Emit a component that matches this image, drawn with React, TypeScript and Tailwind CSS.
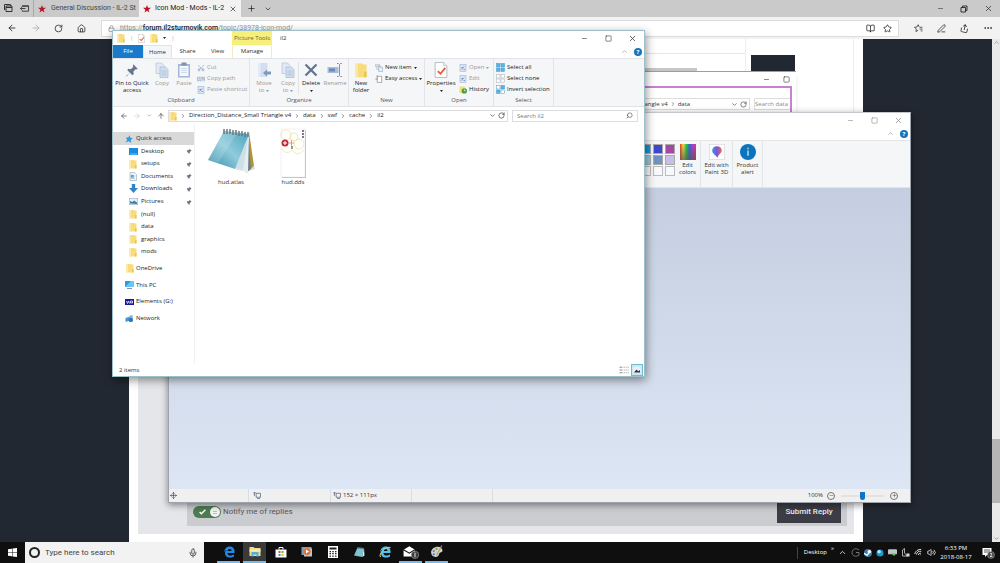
import React from 'react';
import {
  ArrowLeft,
  ArrowRight,
  ArrowUp,
  BookOpen,
  ChevronDown,
  ChevronRight,
  ChevronUp,
  Ellipsis,
  House,
  Lock,
  Mic,
  Minus,
  Move,
  PenLine,
  Plus,
  RotateCw,
  Scissors,
  Search,
  Share,
  Square,
  Star,
  Volume2,
  Wifi,
  X,
} from 'lucide-react';

type Kids = { children?: React.ReactNode };

/* ---------- small drawings ---------- */

const Folder = ({ className = 'h-2.5 w-2' }: { className?: string }) => (
  <svg viewBox="0 0 16 20" className={className} aria-hidden="true">
    <path d="M1 2h9l1 1h4v16H1z" fill="#f8dc7c" />
    <path d="M1 2h3v17H1z" fill="#fbe9a6" />
    <path d="M12 12h3v7h-3z" fill="#e9c558" />
  </svg>
);

const RedStar = () => (
  <svg viewBox="0 0 20 20" className="h-2 w-2 shrink-0" aria-hidden="true">
    <path d="M10 0l2.6 7H20l-6 4.600 2.300 7.400L10 14.500 3.700 19 6 11.600 0 7h7.400z" fill="#b8142a" />
  </svg>
);

const CheckPage = ({ className }: { className: string }) => (
  <svg viewBox="0 0 24 30" className={className} aria-hidden="true">
    <path d="M1 1h16l6 6v22H1z" fill="#fff" stroke="#a9adb3" strokeWidth="1.500" />
    <path d="M17 1v6h6" fill="#e8eaed" stroke="#a9adb3" />
    <path d="M6 17l5 5 9-11" fill="none" stroke="#e0603a" strokeWidth="3.500" />
  </svg>
);

const Pages = ({ className = 'h-4 w-4' }: { className?: string }) => (
  <svg viewBox="0 0 32 32" className={className} aria-hidden="true">
    <path d="M4 2h11l5 5v16H4z" fill="#e2e9f5" stroke="#b5c5de" strokeWidth="1.500" />
    <path d="M12 10h11l5 5v16H12z" fill="#d3deef" stroke="#a9bcd8" strokeWidth="1.500" />
    <path d="M15 18h10M15 22h10M15 26h10" stroke="#a9bcd8" strokeWidth="1.500" />
  </svg>
);

const PinBig = () => (
  <svg viewBox="0 0 32 32" className="h-3.5 w-3.5" aria-hidden="true">
    <path d="M19 3l10 10-3 2-2-1-5 6 1 5-3 3-6-6-7 8-2 1 1-2 8-7-6-6 3-3 5 1 6-5-1-2z" fill="#65778e" />
  </svg>
);

const PinSmall = () => (
  <svg viewBox="0 0 16 16" className="h-1.5 w-1.5" aria-hidden="true">
    <path d="M9 1l6 6-2 1-3 3v3l-2 1-3-3-4 4 4-5-3-3 1-2h3l4-3z" fill="#6d7580" />
  </svg>
);

const Clipboard = () => (
  <svg viewBox="0 0 28 32" className="h-4 w-3.5" aria-hidden="true">
    <rect x="2" y="4" width="24" height="27" fill="#a5b8d5" />
    <rect x="5" y="8" width="18" height="20" fill="#f4f7fc" />
    <rect x="9" y="1" width="10" height="6" fill="#7f92b0" />
    <path d="M8 13h12M8 17h12M8 21h12" stroke="#c2cfe4" strokeWidth="1.500" />
  </svg>
);

const MoveTo = () => (
  <svg viewBox="0 0 30 32" className="h-4 w-4" aria-hidden="true">
    <path d="M3 2h19v28H3z" fill="#d3dff1" />
    <path d="M3 2h5v28H3z" fill="#e3ebf7" />
    <path d="M13 22l8-7v4h8v6h-8v4z" fill="#8299bf" />
  </svg>
);

const DeleteX = () => (
  <svg viewBox="0 0 28 28" className="h-3.5 w-3.5" aria-hidden="true">
    <path d="M3 3l22 22M25 3L3 25" stroke="#62748f" strokeWidth="4.500" />
  </svg>
);

const Rename = () => (
  <svg viewBox="0 0 32 30" className="h-4 w-4" aria-hidden="true">
    <rect x="1" y="9" width="22" height="12" fill="#a9bddb" />
    <rect x="4" y="12" width="12" height="6" fill="#6d88b3" />
    <path d="M20 2h3l2 2 2-2h3M25 4v22M20 28h3l2-2 2 2h3" fill="none" stroke="#7e93b5" strokeWidth="2" />
  </svg>
);

const Help = () => (
  <span className="flex size-2 items-center justify-center rounded-full bg-[#1673bd] text-[6px] leading-none font-bold text-white">
    ?
  </span>
);

const TinyPage = ({ tint }: { tint: 'blue' | 'grey' }) => (
  <svg viewBox="0 0 16 16" className="size-2 shrink-0" aria-hidden="true">
    <rect x="2" y="1" width="12" height="14" fill={tint === 'blue' ? '#dbe6f6' : '#fff'} stroke={tint === 'blue' ? '#8fa9d0' : '#7f858d'} />
    <path d="M5 11l5-6M5 7h3M9 11h3" stroke={tint === 'blue' ? '#5b7fb8' : '#7f858d'} strokeWidth="1.500" />
  </svg>
);

const ShortPath = () => (
  <svg viewBox="0 0 18 12" className="h-1.5 w-2 shrink-0" aria-hidden="true">
    <rect x="0" y="1" width="18" height="10" fill="#b3c2da" />
    <path d="M3 3l2 6M8 3l2 6M12 9h4" stroke="#fff" strokeWidth="1.500" />
  </svg>
);

const NewItemIcon = () => (
  <svg viewBox="0 0 18 18" className="size-2 shrink-0" aria-hidden="true">
    <path d="M1 1h9v5H1zM4 4h8v8H4z" fill="#fff" stroke="#8b9199" />
    <path d="M8 7h9v10H8z" fill="#dff0fb" stroke="#6f94b5" />
  </svg>
);

const EasyIcon = () => (
  <svg viewBox="0 0 18 18" className="size-2 shrink-0" aria-hidden="true">
    <path d="M5 3h10v14H5z" fill="#fff" stroke="#7f858d" strokeWidth="1.500" />
    <path d="M1 9h5M5 1v4" stroke="#7f858d" strokeWidth="2" />
  </svg>
);

const HistoryIcon = () => (
  <svg viewBox="0 0 18 18" className="size-2 shrink-0" aria-hidden="true">
    <path d="M1 1h12v15H1z" fill="#f2df77" />
    <circle cx="12" cy="11" r="6" fill="#4c9a4a" />
    <path d="M12 7v4h3" stroke="#fff" strokeWidth="1.500" fill="none" />
  </svg>
);

const SelectIcon = ({ kind }: { kind: 'all' | 'none' | 'invert' }) => {
  const cell = (x: number, y: number, lit: boolean) => (
    <rect x={x} y={y} width="7" height="7" fill={lit ? '#58b4e6' : '#ffffff'} stroke={kind === 'none' ? '#a7adb4' : '#4b97c4'} />
  );
  return (
    <svg viewBox="0 0 18 18" className="size-[9px] shrink-0" aria-hidden="true">
      {cell(1, 1, kind === 'all')}
      {cell(10, 1, kind !== 'none')}
      {cell(1, 10, kind !== 'none')}
      {cell(10, 10, kind === 'all')}
    </svg>
  );
};

/* ---------- window buttons ---------- */

const RestoreIcon = () => (
  <svg viewBox="0 0 16 16" className="size-2" fill="none" stroke="currentColor" strokeWidth="2" aria-hidden="true">
    <path d="M2 5h9v9H2zM5 5V2h9v9h-3" />
  </svg>
);

const Controls = ({ tone = 'text-[#333]', restored }: { tone?: string; restored?: boolean }) => (
  <div className={`flex ${tone}`}>
    <button aria-label="Minimize" className="flex w-6 items-center justify-center"><Minus size={7} /></button>
    <button aria-label="Maximize" className="flex w-6 items-center justify-center">
      {restored ? <RestoreIcon /> : <Square size={7} strokeWidth={2} />}
    </button>
    <button aria-label="Close" className="flex w-6 items-center justify-center"><X size={9} /></button>
  </div>
);

/* ---------- browser ---------- */

const Browser = () => (
  <header className="font-[Roboto,sans-serif] text-[#222]">
    <div className="flex h-[17px] bg-[#cacaca] text-[7px]">
      <div className="flex w-[34px] items-center justify-between border-r border-[#a9a9a9] pr-1 pl-1">
        <svg viewBox="0 0 18 18" className="size-[9px]" aria-hidden="true">
          <path d="M1 12V1h12v3M4 15V4h12v11z M4 7h12" fill="none" stroke="#333" strokeWidth="2" />
        </svg>
        <svg viewBox="0 0 20 18" className="size-[9px]" aria-hidden="true">
          <path d="M5 5V3h14v12H5v-2M5 4h14M12 9H1M4 6L1 9l3 3" fill="none" stroke="#333" strokeWidth="2" />
        </svg>
      </div>
      <button className="flex w-[105px] items-center gap-[5px] overflow-hidden pl-1 whitespace-nowrap text-[#444]">
        <RedStar /><span>General Discussion - IL-2 St</span>
      </button>
      <div className="flex w-[102px] items-center bg-[#f2f2f2] pl-1">
        <button className="flex flex-1 items-center gap-1 whitespace-nowrap">
          <RedStar /><span>Icon Mod - Mods - IL-2</span>
        </button>
        <button aria-label="Close tab" className="px-1"><X size={8} /></button>
      </div>
      <div className="flex flex-1 items-center gap-2 pl-1.5">
        <button aria-label="New tab"><Plus size={9} /></button>
        <button aria-label="Tab list"><ChevronDown size={8} /></button>
      </div>
      <Controls restored />
    </div>
    <div className="flex h-[22px] items-center bg-[#f2f2f2]">
      <nav className="flex w-[101px] items-center justify-around pr-2">
        <button aria-label="Back"><ArrowLeft size={10} /></button>
        <button aria-label="Forward" className="text-[#aaa]"><ArrowRight size={10} /></button>
        <button aria-label="Refresh"><RotateCw size={9} /></button>
        <button aria-label="Home"><House size={9} /></button>
      </nav>
      <div className="flex h-[17px] flex-1 items-center border border-[#dcdcdc] bg-white">
        <div className="relative flex flex-1 items-center gap-2 pl-1.5 text-[7px]">
          <Lock size={7} className="text-[#777]" />
          <input aria-label="Address" className="h-3 flex-1 bg-transparent outline-none" />
          <div className="pointer-events-none absolute left-[18px] whitespace-nowrap text-[#999]">
            https://<b className="font-medium text-[#222]">forum.il2sturmovik.com</b>/topic/38978-icon-mod/
          </div>
        </div>
        <div className="flex gap-2 pr-1.5">
          <button aria-label="Reading view"><BookOpen size={9} /></button>
          <button aria-label="Add to favorites"><Star size={9} /></button>
        </div>
      </div>
      <div className="flex w-[101px] items-center justify-around pl-2">
        <button aria-label="Favorites">
          <svg viewBox="0 0 24 22" className="h-2 w-[9px]" fill="none" stroke="currentColor" strokeWidth="2" aria-hidden="true">
            <path d="M15 9h8M15 14h8M18 19h5M14 8l-3-6-3 6-7 1 5 5-1 7 6-4" />
          </svg>
        </button>
        <button aria-label="Add notes"><PenLine size={9} /></button>
        <button aria-label="Share"><Share size={9} className="rotate-12" /></button>
        <button aria-label="More"><Ellipsis size={10} /></button>
      </div>
    </div>
  </header>
);

const ForumPage = () => (
  <div className="flex min-h-0 flex-1 bg-[#222831]">
    <div className="flex flex-1 justify-center">
      <main className="flex h-full w-[74%] flex-col bg-white px-[9px] pb-2">
        <div className="flex flex-1 flex-col justify-end bg-[#e5e6ea] pr-[7px] pb-2 pl-[49px]">
          <div className="flex h-7 items-center justify-between bg-[#cbccd0] px-1.5 font-[Roboto,sans-serif]">
            <label className="flex items-center gap-0.5 text-[8px] text-[#55565c]">
              <span className="relative flex h-3 w-7 items-center justify-between rounded-full bg-[#4c7c50] pr-px pl-1.5">
                <input type="checkbox" defaultChecked className="absolute inset-0 m-0 appearance-none" />
                <svg viewBox="0 0 12 10" className="h-1.5 w-[7px]" aria-hidden="true"><path d="M1 5l3 3 7-7" fill="none" stroke="#fff" strokeWidth="2.500" /></svg>
                <span className="flex size-2.5 flex-col items-center justify-center gap-px rounded-full bg-[#f3f3f3]">
                  <span className="h-px w-1 bg-[#bbb]" /><span className="h-px w-1 bg-[#bbb]" />
                </span>
              </span>
              <span>Notify me of replies</span>
            </label>
            <button className="h-[21px] w-16 bg-[#3c3c46] text-[8px] font-medium text-[#eee]">Submit Reply</button>
          </div>
        </div>
      </main>
    </div>
    <div className="flex w-2 flex-col items-center justify-between bg-[#e9e9e9] text-[#777]">
      <ChevronUp size={7} />
      <div className="mt-auto mb-8 h-16 w-full bg-[#b5b5b5]" />
      <ChevronDown size={7} />
    </div>
  </div>
);

/* ---------- background windows ---------- */

const PostPreview = () => (
  <div className="absolute top-[39px] left-[600px] flex h-20 w-[254px] border-r border-[#eee] bg-white">
    <div className="flex h-full w-[146px] flex-col justify-start border-r border-[#eee] pt-[14px]">
      <div className="h-[15px] border-t border-[#e6e6e6]" />
      <div className="h-1.5 w-[97px] bg-[#c6c6c6]" />
    </div>
    <div className="mt-4 ml-[5px] h-4 w-11 bg-[#222831]" />
  </div>
);

const DataWindow = () => (
  <section aria-label="data" className="absolute top-[71px] left-[560px] h-12 w-[236px] border-t border-[#8aa5ab] bg-white shadow-md">
    <div className="flex h-[14px] justify-end text-[#333]">
      <button aria-label="Minimize" className="flex w-5 items-center justify-center"><Minus size={7} /></button>
      <button aria-label="Maximize" className="flex w-5 items-center justify-center"><Square size={7} strokeWidth={2} /></button>
    </div>
    <div className="mr-1 flex h-8 items-start gap-1 border-t-2 border-r-2 border-[#c97fd2] pt-2.5 pl-20 text-[6px] text-[#333]">
      <div className="flex h-3 flex-1 items-center border border-[#ddd]">
        <span className="pl-0.5 whitespace-nowrap">iangle v4</span>
        <ChevronRight size={6} className="mx-0.5" />
        <span className="flex-1">data</span>
        <ChevronDown size={7} />
        <RotateCw size={7} className="mx-0.5" />
      </div>
      <div className="h-3 w-9 border border-r-0 border-[#ddd]">
        <input aria-label="Search data" placeholder="Search data" className="block h-full w-full outline-none placeholder:text-[#888]" />
      </div>
    </div>
  </section>
);

const Swatches = () => (
  <div className="grid grid-cols-3 gap-x-0.5 gap-y-px">
    <span className="size-2.5 border border-[#aaa] bg-[#0f96d8]" />
    <span className="size-2.5 border border-[#aaa] bg-[#3f48cc]" />
    <span className="size-2.5 border border-[#aaa] bg-[#a349a4]" />
    <span className="size-2.5 border border-[#aaa] bg-[#8fc9dc]" />
    <span className="size-2.5 border border-[#aaa] bg-[#7092be]" />
    <span className="size-2.5 border border-[#aaa] bg-[#c8bfe7]" />
    <span className="size-2.5 border border-[#bbb] bg-[#f8f9fa]" />
    <span className="size-2.5 border border-[#bbb] bg-[#f8f9fa]" />
    <span className="size-2.5 border border-[#bbb] bg-[#f8f9fa]" />
  </div>
);

const PaintTool = ({ width, label, children }: Kids & { width: string; label: string }) => (
  <button className={`flex ${width} flex-col items-center gap-0.5 border-r border-[#e3e5e8] pt-[3px] leading-[7px]`}>
    {children}
    <span className="whitespace-pre-line">{label}</span>
  </button>
);

const SizeIcon = () => (
  <svg viewBox="0 0 18 16" className="h-[7px] w-2" aria-hidden="true">
    <path d="M1 2h5M3 0v9M7 3h10v9H7zM9 15h7" fill="none" stroke="#3d5270" strokeWidth="1.500" />
  </svg>
);

const PaintWindow = () => (
  <section aria-label="Paint" className="absolute top-[112px] left-[168px] flex h-[391px] w-[743px] flex-col border border-[#9da3ac] border-t-[#c4c8cd] bg-white text-[6px] text-[#333] shadow-[0_2px_7px_rgba(0,0,0,0.45)]">
    <div className="flex h-[14px] justify-end"><Controls tone="text-[#888]" /></div>
    <div className="flex h-[13px] items-center justify-end gap-1.5 pr-0.5"><ChevronUp size={7} className="text-[#888]" /><Help /></div>
    <div className="flex h-12 border-y border-[#e3e5e8] bg-[#f5f6f7] pl-[472px]">
      <div className="pt-[3px]"><Swatches /></div>
      <PaintTool width="w-[26px]" label={'Edit\ncolors'}>
        <svg viewBox="0 0 30 30" className="size-4" aria-hidden="true">
          <defs>
            <linearGradient id="hue"><stop offset="0" stopColor="#e83a2b" /><stop offset=".2" stopColor="#e8e43c" /><stop offset=".4" stopColor="#2fc24a" /><stop offset=".6" stopColor="#2f64e0" /><stop offset=".8" stopColor="#b23ad8" /><stop offset="1" stopColor="#e8365c" /></linearGradient>
            <linearGradient id="dark" x1="0" x2="0" y1="0" y2="1"><stop offset="0" stopColor="#555" stopOpacity="0" /><stop offset="1" stopColor="#555" stopOpacity=".7" /></linearGradient>
          </defs>
          <rect width="30" height="30" fill="url(#hue)" /><rect width="30" height="30" fill="url(#dark)" />
        </svg>
      </PaintTool>
      <PaintTool width="w-8" label={'Edit with\nPaint 3D'}>
        <svg viewBox="0 0 30 30" className="size-4" aria-hidden="true">
          <defs><linearGradient id="drop" x1="0" x2="1"><stop offset="0" stopColor="#2b9ce8" /><stop offset=".5" stopColor="#7d56d8" /><stop offset="1" stopColor="#f06a50" /></linearGradient></defs>
          <rect x=".5" y=".5" width="29" height="29" fill="#fff" stroke="#ccc" />
          <path d="M15 4c6 0 9 4 9 8 0 5-6 6-8 14-3-5-10-8-10-14 0-4 3-8 9-8z" fill="url(#drop)" />
        </svg>
      </PaintTool>
      <PaintTool width="w-[30px]" label={'Product\nalert'}>
        <svg viewBox="0 0 30 30" className="size-4" aria-hidden="true">
          <circle cx="15" cy="15" r="15" fill="#0c74bd" /><path d="M15 12v10M15 7v3" stroke="#fff" strokeWidth="2" />
        </svg>
      </PaintTool>
    </div>
    <div className="flex-1 bg-linear-to-b from-[#c5cee0] to-[#dce6f4]" />
    <footer className="flex h-[13px] items-center bg-[#f0f0f0]">
      <div className="flex h-full w-20 items-center border-r border-[#ddd] pl-px"><Move size={7} /></div>
      <div className="flex h-full w-[82px] items-center border-r border-[#ddd] pl-1"><SizeIcon /></div>
      <div className="flex h-full w-[81px] items-center gap-0.5 border-r border-[#ddd] pl-0.5"><SizeIcon /><span>152 × 111px</span></div>
      <div className="h-full w-[81px] border-r border-[#ddd]" />
      <div className="flex h-full flex-1 items-center justify-end gap-1 pr-3">
        <span>100%</span>
        <button aria-label="Zoom out" className="flex size-2 items-center justify-center rounded-full border border-[#777]"><Minus size={5} /></button>
        <input
          aria-label="Zoom"
          type="range"
          defaultValue={50}
          className="mx-0.5 h-2.5 w-[43px] appearance-none bg-transparent [&::-webkit-slider-runnable-track]:h-2 [&::-webkit-slider-runnable-track]:bg-[#e2e2e2] [&::-webkit-slider-runnable-track]:bg-clip-content [&::-webkit-slider-runnable-track]:py-[3px] [&::-webkit-slider-thumb]:-mt-[3px] [&::-webkit-slider-thumb]:h-2 [&::-webkit-slider-thumb]:w-[5px] [&::-webkit-slider-thumb]:appearance-none [&::-webkit-slider-thumb]:rounded-b-sm [&::-webkit-slider-thumb]:bg-[#1273c4]"
        />
        <button aria-label="Zoom in" className="flex size-2 items-center justify-center rounded-full border border-[#777]"><Plus size={5} /></button>
      </div>
    </footer>
  </section>
);

/* ---------- file explorer ---------- */

const Caret = ({ className = '' }: { className?: string }) => (
  <svg viewBox="0 0 8 5" className={`h-0.5 w-[3px] shrink-0 ${className}`} aria-hidden="true"><path d="M0 0h8L4 5z" fill="currentColor" /></svg>
);

const Group = ({ label, width, children }: Kids & { label: string; width: string }) => (
  <div className={`flex ${width} flex-col border-r border-[#e2e4e7]`}>
    <div className="flex h-[38px] pt-[3px]">{children}</div>
    <div className="text-center leading-[7px] text-[#555]">{label}</div>
  </div>
);

const Big = ({ label, second, width, off, arrow, children }: Kids & { label: string; second?: string; width: string; off?: boolean; arrow?: boolean }) => (
  <button className={`flex ${width} shrink-0 flex-col items-center leading-[7px] whitespace-nowrap ${off ? 'text-[#999]' : 'text-[#222]'}`}>
    <span className="mb-0.5 flex h-4 items-center">{children}</span>
    <span>{label}</span>
    {(second || arrow) && (
      <span className="flex h-[7px] items-center gap-0.5">
        {second}
        {arrow && <Caret />}
      </span>
    )}
  </button>
);

const Rows = ({ children }: Kids) => <div className="flex flex-col pl-0.5">{children}</div>;

const Row = ({ icon, label, off, arrow }: { icon: React.ReactNode; label: string; off?: boolean; arrow?: boolean }) => (
  <button className={`flex h-[11px] items-center gap-0.5 whitespace-nowrap ${off ? 'text-[#999]' : 'text-[#222]'}`}>
    {icon}<span>{label}</span>{arrow && <Caret />}
  </button>
);

const Ribbon = () => (
  <div className="flex h-[49px] border-y border-[#e1e3e6] bg-[#f5f6f7]">
    <Group label="Clipboard" width="w-[137px]">
      <Big label="Pin to Quick" second="access" width="w-[38px]"><PinBig /></Big>
      <Big label="Copy" width="w-[22px]" off><Pages /></Big>
      <Big label="Paste" width="w-[22px]" off><Clipboard /></Big>
      <Rows>
        <Row icon={<Scissors size={8} className="-rotate-90 text-[#8fa3c4]" />} label="Cut" off />
        <Row icon={<ShortPath />} label="Copy path" off />
        <Row icon={<TinyPage tint="blue" />} label="Paste shortcut" off />
      </Rows>
    </Group>
    <Group label="Organize" width="w-[99px]">
      <Big label="Move" second="to" width="w-7" off arrow><MoveTo /></Big>
      <div className="mb-0.5 flex border-r border-[#e2e4e7]">
        <Big label="Copy" second="to" width="w-5" off arrow><Pages /></Big>
      </div>
      <Big label="Delete" width="w-6" arrow><DeleteX /></Big>
      <Big label="Rename" width="w-6" off><Rename /></Big>
    </Group>
    <Group label="New" width="w-[76px]">
      <Big label="New" second="folder" width="w-6"><Folder className="h-4 w-3.5" /></Big>
      <Rows>
        <Row icon={<NewItemIcon />} label="New item" arrow />
        <Row icon={<EasyIcon />} label="Easy access" arrow />
      </Rows>
    </Group>
    <Group label="Open" width="w-[69px]">
      <Big label="Properties" width="w-8" arrow><CheckPage className="h-4 w-3.5" /></Big>
      <Rows>
        <Row icon={<TinyPage tint="blue" />} label="Open" off arrow />
        <Row icon={<TinyPage tint="blue" />} label="Edit" off />
        <Row icon={<HistoryIcon />} label="History" />
      </Rows>
    </Group>
    <Group label="Select" width="w-[60px]">
      <Rows>
        <Row icon={<SelectIcon kind="all" />} label="Select all" />
        <Row icon={<SelectIcon kind="none" />} label="Select none" />
        <Row icon={<SelectIcon kind="invert" />} label="Invert selection" />
      </Rows>
    </Group>
  </div>
);

const Monitor = () => (
  <svg viewBox="0 0 18 16" className="h-2 w-[9px]" aria-hidden="true">
    <rect x="0" y="0" width="18" height="12" fill="#2b9be0" /><path d="M0 12L12 0h6v12z" fill="#6cc6f2" /><path d="M4 14h10v2H4z" fill="#7f98a8" />
  </svg>
);

const places: { name: string; icon: React.ReactNode; pinned?: boolean }[] = [
  { name: 'Desktop', pinned: true, icon: <svg viewBox="0 0 18 14" className="h-[7px] w-[9px]"><rect width="18" height="14" fill="#1a8be0" /><path d="M2 12h14" stroke="#6cc6f2" strokeWidth="2" /></svg> },
  { name: 'setups', pinned: true, icon: <Folder /> },
  { name: 'Documents', pinned: true, icon: <svg viewBox="0 0 16 18" className="h-[9px] w-2"><path d="M2 1h9l4 4v12H2z" fill="#f4f8fb" stroke="#7b93a5" /><path d="M4 6h5v5H4zM4 13h8M10 8h3" fill="#6ca3c7" stroke="#6ca3c7" /></svg> },
  { name: 'Downloads', pinned: true, icon: <svg viewBox="0 0 16 16" className="h-[9px] w-[9px]"><path d="M5 0h6v7h5l-8 9-8-9h5z" fill="#2c86cf" /></svg> },
  { name: 'Pictures', pinned: true, icon: <svg viewBox="0 0 18 14" className="h-[7px] w-[9px]"><rect x=".5" y=".5" width="17" height="13" fill="#e6f2fa" stroke="#8aa0b0" /><path d="M2 11V6l5 2 3-3 6 4v3z" fill="#3d7fa8" /></svg> },
  { name: '(null)', icon: <Folder /> },
  { name: 'data', icon: <Folder /> },
  { name: 'graphics', icon: <Folder /> },
  { name: 'mods', icon: <Folder /> },
];

const roots: { name: string; icon: React.ReactNode }[] = [
  { name: 'OneDrive', icon: <Folder /> },
  { name: 'This PC', icon: <Monitor /> },
  { name: 'Elements (G:)', icon: <svg viewBox="0 0 18 12" className="h-1.5 w-[9px]"><rect width="18" height="12" fill="#1717a6" /><path d="M3 4l2 5 2-5 2 5M11 4v4h4V4z" fill="none" stroke="#fff" strokeWidth="1.500" /></svg> },
  { name: 'Network', icon: <svg viewBox="0 0 20 18" className="h-2 w-[9px]"><path d="M1 7l9-3v9l-9 3z" fill="#3f9ad6" /><path d="M9 2l8-2v9l-8 3z" fill="#68bdec" /><circle cx="13" cy="11" r="5" fill="#2d78b5" /></svg> },
];

const SideNav = () => (
  <nav className="w-[82px] overflow-hidden border-r border-[#f0f0f0] pt-2 text-[#222]">
    <a href="#quick" className="flex h-[13px] items-center gap-[3px] bg-[#d9d9d9] pl-3">
      <svg viewBox="0 0 18 18" className="size-2" aria-hidden="true"><path d="M10 0l2 6 6 1-5 4 1 7-5-4-8 3 4-6-3-5 6-1z" fill="#3697dd" /></svg>
      Quick access
    </a>
    <ul className="flex h-[113px] flex-col">
      {places.map((p) => (
        <li key={p.name} className="flex flex-1">
          <a href={`#${p.name}`} className="flex flex-1 items-center pr-0.5 pl-4">
            <span className="flex w-3 items-center">{p.icon}</span>
            <span className="flex-1">{p.name}</span>
            {p.pinned && <PinSmall />}
          </a>
        </li>
      ))}
    </ul>
    <ul className="mt-0.5 flex h-[67px] flex-col">
      {roots.map((r) => (
        <li key={r.name} className="flex flex-1">
          <a href={`#${r.name}`} className="flex flex-1 items-center gap-0.5 pl-3">
            <span className="flex w-[9px] justify-center">{r.icon}</span>{r.name}
          </a>
        </li>
      ))}
    </ul>
  </nav>
);

const AtlasIcon = () => (
  <svg viewBox="0 0 48 46" className="h-[46px] w-12" aria-hidden="true">
    <defs><linearGradient id="pad" x1="0" x2="1" y1="1" y2="0"><stop offset="0" stopColor="#2f8ca6" /><stop offset=".5" stopColor="#8fcbdc" /><stop offset="1" stopColor="#4aa5bd" /></linearGradient></defs>
    <ellipse cx="38" cy="40" rx="10" ry="3" fill="#d9dcdf" />
    <path d="M42 4l5 34-6 5z" fill="#b39536" />
    <path d="M41 5l3 36-5 4z" fill="#6b7f86" />
    <path d="M42 6l-1 39-13-5z" fill="#e6eef2" />
    <path d="M42 6l-6 36-8-2z" fill="#cfdfe6" />
    <path d="M17 3l25 3-14 35L1 32z" fill="url(#pad)" />
    <path d="M17 3L1 32l10 3 20-31z" fill="#fff" opacity=".16" />
    <path d="M17 1v5M20 1v5M23 1v5M26 2v5M29 2v5M32 3v5M35 3v5M38 4v5M41 4v5" stroke="#6f7a7f" strokeWidth="1.500" />
  </svg>
);

const DdsIcon = () => (
  <svg viewBox="0 0 26 50" className="h-[50px] w-[26px]" aria-hidden="true">
    <rect x="2" y="2" width="24" height="48" fill="#bbb" /><rect x="1" y="1" width="24" height="48" fill="#fff" stroke="#e4e4e4" strokeWidth=".5" />
    <g fill="none" stroke="#eee2a0" strokeWidth=".8"><circle cx="6" cy="7" r="5" /><circle cx="19" cy="16" r="5" /><circle cx="14" cy="9" r="4" /><path d="M1 20q5 8 11 2M12 22q5 8 12 0" /></g>
    <circle cx="5" cy="15" r="3.500" fill="#c5282c" /><path d="M5 13v4M3 15h4" stroke="#fff" />
    <path d="M9 15h5M11.500 12v6" stroke="#e09a9a" /><path d="M23 2v8" stroke="#59456a" strokeWidth="1.500" strokeDasharray="2 1" /><path d="M12 18v3" stroke="#333" />
  </svg>
);

const Crumb = ({ children }: Kids) => (
  <><ChevronRight size={6} className="mx-[3px] shrink-0" /><span className="whitespace-nowrap">{children}</span></>
);

const Explorer = () => (
  <section aria-label="il2" className="absolute top-[30px] left-[112px] flex h-[347px] w-[533px] flex-col border border-[#9cc0c9] bg-white font-['Open_Sans',sans-serif] text-[6px] text-[#333] shadow-[1px_3px_9px_rgba(0,0,0,0.45)]">
    <div className="flex h-[14px]">
      <div className="flex w-[119px] items-center gap-[5px] pl-1 text-[#aaa]">
        <Folder /><span>|</span><CheckPage className="h-[9px] w-[7px]" /><Folder />
        <span className="text-[#222]"><Caret /></span><span>|</span>
      </div>
      <div className="flex w-10 items-center justify-center bg-[#f5f07c] whitespace-nowrap text-[#66632f]">Picture Tools</div>
      <h1 className="flex flex-1 items-center pl-2">il2</h1>
      <Controls />
    </div>
    <div className="flex h-[13px] items-stretch">
      <button className="w-[30px] bg-[#1979ca] text-white">File</button>
      <button className="w-[29px] border-x border-t border-[#e1e3e6] bg-[#f5f6f7]">Home</button>
      <button className="w-[31px]">Share</button>
      <button className="w-[29px]">View</button>
      <button className="w-10 border-x border-[#f1efc2]">Manage</button>
      <div className="flex flex-1 items-center justify-end gap-1.5 pr-0.5 text-[#888]"><ChevronUp size={7} /><Help /></div>
    </div>
    <Ribbon />
    <div className="flex h-[17px] items-center pr-1.5 text-[#444]">
      <div className="flex w-[55px] items-center justify-around pl-1">
        <ArrowLeft size={8} /><ArrowRight size={8} className="text-[#ccc]" /><ChevronDown size={5} /><ArrowUp size={8} />
      </div>
      <div className="flex h-3 flex-1 items-center border border-[#ddd] text-[#222]">
        <Folder />
        <Crumb>Direction_Distance_Small Triangle v4</Crumb><Crumb>data</Crumb><Crumb>swf</Crumb><Crumb>cache</Crumb><Crumb>il2</Crumb>
        <span className="flex-1" />
        <ChevronDown size={7} /><RotateCw size={7} className="mx-0.5" />
      </div>
      <label className="ml-1 flex h-3 w-[126px] items-center border border-[#ddd] px-1">
        <input aria-label="Search il2" placeholder="Search il2" className="h-full min-w-0 flex-1 outline-none placeholder:text-[#777]" />
        <Search size={7} className="-scale-x-100" />
      </label>
    </div>
    <div className="flex min-h-0 flex-1">
      <SideNav />
      <div className="flex items-start gap-3.5 px-3 pt-1">
        <figure className="flex w-12 flex-col items-center"><AtlasIcon /><figcaption className="mt-1 leading-2">hud.atlas</figcaption></figure>
        <figure className="flex w-12 flex-col items-center"><DdsIcon /><figcaption className="leading-2">hud.dds</figcaption></figure>
      </div>
    </div>
    <footer className="flex h-3 items-center justify-between pr-px pl-1.5">
      <span>2 items</span>
      <div className="flex items-center gap-0.5">
        <button aria-label="Details view"><svg viewBox="0 0 18 14" className="h-2 w-2.5"><path d="M1 2h5M1 7h5M1 12h5" stroke="#888" strokeWidth="2" /><path d="M8 2h10M8 7h10M8 12h10" stroke="#aaa" strokeWidth="1.500" strokeDasharray="3 1" /></svg></button>
        <button aria-label="Large icons" className="flex h-3 w-3 items-center justify-center border border-[#6fbccf] bg-[#c9eaf2]"><svg viewBox="0 0 12 10" className="h-1.5 w-2"><rect width="12" height="10" fill="#eef" /><path d="M1 9l4-5 3 3 3-2v4z" fill="#333" /></svg></button>
      </div>
    </footer>
  </section>
);

/* ---------- taskbar ---------- */

const TaskButton = ({ label, open, active, children }: Kids & { label: string; open?: boolean; active?: boolean }) => (
  <button aria-label={label} className={`flex w-[23px] items-center justify-center border-b-2 ${open ? 'border-[#76b9ed]' : 'border-transparent'} ${active ? 'bg-[#3a3a3a]' : ''}`}>
    {children}
  </button>
);

const EdgeE = ({ color, ring }: { color: string; ring?: boolean }) => (
  <svg viewBox="0 0 24 24" className="size-3" aria-hidden="true">
    <path d="M2 13C3 5 8 1 13 1c6 0 10 4 10 9v4H9c0 4 3 5 6 5 2 0 5-1 7-2v4c-3 2-6 2-8 2-7 0-10-4-10-9 0-3 2-6 4-7-3 1-5 3-6 6zM9 10h8c0-3-2-4-4-4s-4 2-4 4z" fill={color} />
    {ring && <path d="M3 22C-2 16 14 0 23 3" fill="none" stroke="#ecd159" strokeWidth="2" />}
  </svg>
);

const Palette = () => (
  <svg viewBox="0 0 24 24" className="size-[13px]" aria-hidden="true">
    <path d="M2 14C2 7 8 3 14 3c6 0 9 4 9 7 0 4-5 3-6 6s-2 6-7 6c-4 0-8-3-8-8z" fill="#c9d3d8" />
    <circle cx="7" cy="11" r="2" fill="#d8553e" /><circle cx="12" cy="7" r="2" fill="#65a846" /><circle cx="7" cy="17" r="2" fill="#3e7fc4" />
    <path d="M22 1L12 19" stroke="#c99748" strokeWidth="2" />
  </svg>
);

const Taskbar = () => (
  <footer className="flex h-[21px] shrink-0 bg-[#0f0f10] text-white">
    <button aria-label="Start" className="flex w-[25px] items-center justify-center">
      <svg viewBox="0 0 18 18" className="size-[9px]" aria-hidden="true"><path d="M0 2.500l8-1.200V8.500H0zM9 1.200L18 0v8.500H9zM0 9.500h8v7.200l-8-1.200zM9 9.500h9V18l-9-1.200z" fill="#fff" /></svg>
    </button>
    <label className="flex w-[179px] items-center gap-[5px] bg-[#f2f2f2] px-1 font-[Roboto,sans-serif] text-[#444]">
      <span className="size-[11px] rounded-full border-2 border-[#222]" />
      <input aria-label="Type here to search" placeholder="Type here to search" className="min-w-0 flex-1 text-[8px] outline-none placeholder:text-[#444]" />
      <Mic size={10} className="mr-0.5" />
    </label>
    <div className="flex gap-[3px] pl-[13px]">
      <TaskButton label="Edge" open><EdgeE color="#2089e6" /></TaskButton>
      <TaskButton label="File Explorer" open active>
        <svg viewBox="0 0 24 22" className="h-[11px] w-3"><path d="M1 2h8l2 2h12v16H1z" fill="#f5dc86" /><path d="M5 12h14v9h-4v-4H9v4H5z" fill="#4eb0dc" /><path d="M1 7h22v4H1z" fill="#fbedb3" /></svg>
      </TaskButton>
      <TaskButton label="Store">
        <svg viewBox="0 0 24 24" className="size-3"><path d="M8 7V3h8v4" fill="none" stroke="#fff" strokeWidth="2" /><path d="M1 7h22v16H1z" fill="#fff" /><path d="M7 10h4v4H7z" fill="#e8502c" /><path d="M13 10h4v4h-4z" fill="#74b52c" /><path d="M7 16h4v4H7z" fill="#2a9ee0" /><path d="M13 16h4v4h-4z" fill="#f4b41f" /></svg>
      </TaskButton>
      <TaskButton label="Media player">
        <svg viewBox="0 0 24 22" className="h-[11px] w-3"><rect x="1" y="2" width="20" height="16" fill="#7da0b8" /><rect x="6" y="5" width="16" height="16" fill="#b7c5ce" /><circle cx="12" cy="11" r="7" fill="#d9733a" /><path d="M10 7l6 4-6 4z" fill="#fff" /></svg>
      </TaskButton>
      <TaskButton label="Calculator">
        <svg viewBox="0 0 20 24" className="h-3 w-2.5"><rect width="20" height="24" fill="#fff" /><path d="M3 3h14v4H3z" fill="#222" /><path d="M3 11h14M3 15h14M3 20h14" stroke="#222" strokeWidth="2.500" strokeDasharray="3 2.500" /></svg>
      </TaskButton>
      <TaskButton label="Notepad">
        <svg viewBox="0 0 24 24" className="size-3"><path d="M9 3l13 1-4 18L2 19z" fill="#7ec4cf" /><path d="M22 4l1 15-5 3z" fill="#e3edf0" /><path d="M9 3l13 1v2L8 5z" fill="#4b6f78" /></svg>
      </TaskButton>
      <TaskButton label="Internet Explorer"><EdgeE color="#53c1ee" ring /></TaskButton>
      <TaskButton label="Mail" open>
        <svg viewBox="0 0 28 24" className="h-3.5 w-4"><path d="M1 8l10-6 10 6v12H1z" fill="#fff" /><path d="M1 8l10 6 10-6" fill="none" stroke="#111" strokeWidth="2" /><circle cx="21" cy="17" r="6.500" fill="#3d3d3d" stroke="#aaa" /><path d="M21 13v8" stroke="#fff" strokeWidth="1.500" /></svg>
      </TaskButton>
      <TaskButton label="Paint" open><Palette /></TaskButton>
    </div>
    <div className="ml-auto flex items-center gap-1 text-[6px]">
      <span className="h-3 border-l border-[#444] pr-0.5" />
      <span>Desktop</span><span className="mb-2">»</span>
      <ChevronUp size={9} />
      <div className="flex items-center gap-1">
        <svg viewBox="0 0 18 18" className="size-[9px]"><path d="M16 4C10-1 2 2 2 9s8 10 14 5V9h-6" fill="none" stroke="#777" strokeWidth="2" /></svg>
        <svg viewBox="0 0 18 18" className="size-2"><circle cx="9" cy="9" r="9" fill="#3c79ad" /><circle cx="12" cy="6" r="4" fill="#fff" /><path d="M0 10l7 4 4-5" stroke="#fff" strokeWidth="3" fill="none" /></svg>
        <svg viewBox="0 0 18 18" className="size-2"><circle cx="9" cy="9" r="8" fill="#178fd6" /><circle cx="7" cy="6" r="4" fill="#a7ecff" /><path d="M9 17l7-7-4-2z" fill="#3fae6e" /></svg>
        <svg viewBox="0 0 20 18" className="size-[9px]"><rect y="2" width="20" height="11" rx="2" fill="#bcc6cb" /><path d="M6 11h12l-4 6z" fill="#5fc14c" /></svg>
        <svg viewBox="0 0 18 18" className="size-[9px]"><path d="M3 16V4l4-3v9l6 6z" fill="none" stroke="#ddd" strokeWidth="1.500" /><path d="M11 11h6v6h-6z" fill="#ddd" /></svg>
        <Wifi size={9} className="rotate-[-35deg]" />
        <Volume2 size={9} />
      </div>
      <time className="w-8 text-center leading-[9px] whitespace-nowrap" dateTime="2018-08-17T18:33"><span className="block">6:33 PM</span>2018-08-17</time>
      <button aria-label="Notifications" className="flex w-6 justify-center">
        <svg viewBox="0 0 26 24" className="h-3 w-[13px]"><path d="M1 2h18v14h-9l-4 4v-4H1z" fill="#fff" /><path d="M4 6h12M4 10h12" stroke="#222" strokeWidth="1.500" /><circle cx="18" cy="16" r="7" fill="#444" stroke="#bbb" /><path d="M16 14q2-3 4 0 0 2-4 5h5" fill="none" stroke="#fff" strokeWidth="1.500" /></svg>
      </button>
    </div>
  </footer>
);

export default function App() {
  return (
    <div className="relative flex h-screen flex-col overflow-hidden font-['Open_Sans',sans-serif] [&_svg]:shrink-0">
      <Browser />
      <ForumPage />
      <PostPreview />
      <DataWindow />
      <PaintWindow />
      <Explorer />
      <Taskbar />
    </div>
  );
}
